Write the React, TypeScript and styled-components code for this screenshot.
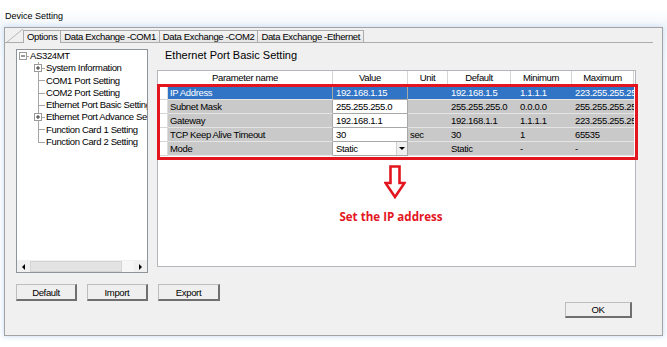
import React from 'react'
import styled, { createGlobalStyle } from 'styled-components'

const GlobalStyle = createGlobalStyle`
  html, body {
    margin: 0;
    padding: 0;
    background: #fff;
  }
  body {
    font-family: "Liberation Sans", Arial, sans-serif;
    font-size: 9.5px;
    letter-spacing: -0.35px;
    color: #000;
  }
  * {
    box-sizing: border-box;
  }
`

const Page = styled.div`
  width: 667px;
  height: 347px;
  overflow: hidden;
  background: linear-gradient(180deg, #fff 0, #fff 10px, #f4f8fc 24px, #fff 60px);
`

const Caption = styled.div`
  height: 27px;
  padding: 11px 0 0 5px;
  font-size: 9px;
  line-height: 11px;
  letter-spacing: 0;
`

const Window = styled.div`
  margin-left: 4px;
  width: 659px;
  height: 309px;
  border: 1px solid #a3a3a3;
  background: #f0f0f0;
  box-shadow: 0 0 5px 1px rgba(160, 195, 230, 0.45);
`

const TabStrip = styled.div`
  display: flex;
  align-items: flex-end;
  height: 14px;
`

const TabLead = styled.svg`
  width: 19px;
  height: 14px;
  flex: none;
`

const Tab = styled.div<{ $active?: boolean }>`
  height: ${p => (p.$active ? 13 : 12)}px;
  margin-left: -1px;
  margin-bottom: ${p => (p.$active ? -1 : 0)}px;
  padding: 0 3px;
  line-height: 11px;
  border: 1px solid #acacac;
  border-bottom: none;
  background: ${p => (p.$active ? '#f0f0f0' : 'linear-gradient(#f4f4f4, #e6e6e6)')};
  position: relative;
  z-index: ${p => (p.$active ? 1 : 0)};
  white-space: nowrap;
`

const Panel = styled.div`
  width: 648px;
  height: 293px;
  border-top: 1px solid #acacac;
  padding: 6px 16px 0 11px;
`

const MainRow = styled.div`
  display: flex;
  gap: 9px;
  height: 224px;
`

const TreeBox = styled.div`
  width: 132px;
  height: 224px;
  border: 1px solid #8f949b;
  background: #fff;
  display: flex;
  flex-direction: column;
`

const TreeItems = styled.div`
  flex: 1;
  overflow: hidden;
  white-space: nowrap;
`

const TreeRow = styled.div<{ $level: number }>`
  display: flex;
  align-items: stretch;
  height: 12.3px;
  line-height: 12.3px;
  padding-left: ${p => (p.$level === 0 ? 2 : 17)}px;
`

const Branch = styled.span<{ $root?: boolean; $last?: boolean }>`
  flex: none;
  width: ${p => (p.$root ? 10 : 11)}px;
  display: flex;
  align-items: center;
  background: ${p =>
    p.$root
      ? 'linear-gradient(#a5a5a5, #a5a5a5) 4px 50% / 6px 1px no-repeat'
      : `linear-gradient(#a5a5a5, #a5a5a5) 4px 0 / 1px ${p.$last ? '50%' : '100%'} no-repeat,
         linear-gradient(#a5a5a5, #a5a5a5) 4px 50% / 7px 1px no-repeat`};
`

const Expander = styled.svg`
  width: 9px;
  height: 9px;
  display: block;
`

const TreeLabel = styled.span`
  padding-left: 1px;
`

const HScroll = styled.div`
  flex: none;
  height: 12px;
  display: flex;
  background: #f0f0f0;
  border-top: 1px solid #f0f0f0;
`

const ScrollArrow = styled.div`
  width: 13px;
  display: flex;
  align-items: center;
  justify-content: center;
`

const ScrollThumb = styled.div`
  width: 92px;
  background: #e3e3e3;
  border: 1px solid #d4d4d4;
`

const ScrollTrack = styled.div`
  flex: 1;
  background: #f6f6f6;
`

const RightCol = styled.div`
  width: 479px;
  display: flex;
  flex-direction: column;
`

const SectionTitle = styled.div`
  height: 21px;
  padding-left: 8px;
  font-size: 11px;
  line-height: 13px;
  letter-spacing: 0;
`

const GridBox = styled.div`
  position: relative;
  height: 197px;
  border: 1px solid #b4b6bb;
  background: #fff;
  display: flex;
  flex-direction: column;
`

const Grid = styled.div`
  display: grid;
  grid-template-columns: 10px 165px 75px 40px 63px 61px 62px;
`

const HeadCell = styled.div<{ $span?: number }>`
  grid-column: span ${p => p.$span ?? 1};
  height: 15px;
  line-height: 14px;
  text-align: center;
  border-right: 1px solid #d5d5d5;
  border-bottom: 1px solid #d5d5d5;
  background: #fff;
  white-space: nowrap;
  overflow: hidden;
`

type CellKind = 'gutter' | 'name' | 'value' | 'info'

const Cell = styled.div<{ $kind: CellKind; $selected?: boolean; $pad?: number }>`
  display: flex;
  align-items: center;
  height: 14px;
  padding-left: ${p => (p.$kind === 'gutter' ? 0 : p.$pad ?? 3)}px;
  white-space: nowrap;
  overflow: hidden;
  border-bottom: 1px solid
    ${p => (p.$kind === 'value' ? '#a8a8a8' : p.$kind === 'gutter' ? '#d4d4d4' : '#e4e4e4')};
  background: ${p =>
    p.$selected && p.$kind !== 'gutter'
      ? '#3173c5'
      : p.$kind === 'name' || p.$kind === 'info'
      ? '#c9c9c9'
      : '#fff'};
  color: ${p => (p.$selected ? '#fff' : '#000')};
  ${p => p.$kind === 'name' && 'border-right: 1px solid #a8a8a8;'}
  ${p => p.$kind === 'value' && 'border-right: 1px solid #a8a8a8;'}
  ${p => p.$kind === 'gutter' && 'border-right: 1px solid #dcdcdc;'}
`

const SelectText = styled.span`
  flex: 1;
`

const DropButton = styled.span`
  width: 11px;
  height: 13px;
  display: flex;
  align-items: center;
  justify-content: center;
  background: #f0f0f0;
  border-left: 1px solid #d0d0d0;
`

const Highlight = styled.div`
  position: absolute;
  left: -1px;
  top: 13px;
  width: 481px;
  height: 76px;
  border: 3px solid #e3161f;
  pointer-events: none;
`

const Annotation = styled.div`
  display: flex;
  flex-direction: column;
  align-items: center;
  margin-top: 9px;
  padding-right: 11px;
`

const ArrowIcon = styled.svg`
  width: 22px;
  height: 34px;
  margin-left: 7px;
`

const Note = styled.div`
  margin-top: 10px;
  font-family: "Open Sans", "Liberation Sans", sans-serif;
  font-weight: 700;
  font-size: 11.6px;
  line-height: 15px;
  letter-spacing: 0;
  color: #e3161f;
`

const ButtonRow = styled.div<{ $end?: boolean }>`
  display: flex;
  gap: 10px;
  justify-content: ${p => (p.$end ? 'flex-end' : 'flex-start')};
  margin-top: ${p => (p.$end ? 1 : 11)}px;
  padding-right: ${p => (p.$end ? 5 : 0)}px;
`

const Button = styled.button<{ $width: number; $height?: number }>`
  width: ${p => p.$width}px;
  height: ${p => p.$height ?? 17}px;
  padding: 0;
  font: inherit;
  letter-spacing: inherit;
  color: #000;
  background: #efefef;
  border: 1px solid #bdbdbd;
  border-right: 2px solid #6f6f6f;
  border-bottom: 2px solid #6f6f6f;
`

type Row = {
  name: string
  value: string
  unit?: string
  def: string
  min: string
  max: string
  selected?: boolean
  select?: boolean
}

const rows: Row[] = [
  { name: 'IP Address', value: '192.168.1.15', def: '192.168.1.5', min: '1.1.1.1', max: '223.255.255.255', selected: true },
  { name: 'Subnet Mask', value: '255.255.255.0', def: '255.255.255.0', min: '0.0.0.0', max: '255.255.255.255' },
  { name: 'Gateway', value: '192.168.1.1', def: '192.168.1.1', min: '1.1.1.1', max: '223.255.255.255' },
  { name: 'TCP Keep Alive Timeout', value: '30', unit: 'sec', def: '30', min: '1', max: '65535' },
  { name: 'Mode', value: 'Static', def: 'Static', min: '-', max: '-', select: true },
]

type TreeNode = { label: string; expandable?: boolean }

const children: TreeNode[] = [
  { label: 'System Information', expandable: true },
  { label: 'COM1 Port Setting' },
  { label: 'COM2 Port Setting' },
  { label: 'Ethernet Port Basic Setting' },
  { label: 'Ethernet Port Advance Setting', expandable: true },
  { label: 'Function Card 1 Setting' },
  { label: 'Function Card 2 Setting' },
]

const tabs = ['Options', 'Data Exchange -COM1', 'Data Exchange -COM2', 'Data Exchange -Ethernet']

function ExpandBox({ open }: { open?: boolean }) {
  return (
    <Expander viewBox="0 0 9 9">
      <rect x="0.5" y="0.5" width="7" height="7" fill="#fff" stroke="#9a9a9a" />
      <line x1="2" y1="4" x2="6" y2="4" stroke="#333" />
      {!open && <line x1="4" y1="2" x2="4" y2="6" stroke="#333" />}
    </Expander>
  )
}

function Triangle({ dir }: { dir: 'left' | 'right' | 'down' }) {
  const points = dir === 'left' ? '4,0 4,6 1,3' : dir === 'right' ? '1,0 1,6 4,3' : '0,1 6,1 3,4'
  return (
    <svg width="6" height="6" viewBox="0 0 6 6">
      <polygon points={points} fill="#000" />
    </svg>
  )
}

function Tree() {
  return (
    <TreeBox>
      <TreeItems>
        <TreeRow $level={0}>
          <Branch $root>
            <ExpandBox open />
          </Branch>
          <TreeLabel>AS324MT</TreeLabel>
        </TreeRow>
        {children.map((node, i) => (
          <TreeRow key={node.label} $level={1}>
            <Branch $last={i === children.length - 1}>{node.expandable && <ExpandBox />}</Branch>
            <TreeLabel>{node.label}</TreeLabel>
          </TreeRow>
        ))}
      </TreeItems>
      <HScroll>
        <ScrollArrow>
          <Triangle dir="left" />
        </ScrollArrow>
        <ScrollThumb />
        <ScrollTrack />
        <ScrollArrow>
          <Triangle dir="right" />
        </ScrollArrow>
      </HScroll>
    </TreeBox>
  )
}

function ParamGrid() {
  return (
    <GridBox>
      <Grid>
        <HeadCell $span={2}>Parameter name</HeadCell>
        <HeadCell>Value</HeadCell>
        <HeadCell>Unit</HeadCell>
        <HeadCell>Default</HeadCell>
        <HeadCell>Minimum</HeadCell>
        <HeadCell>Maximum</HeadCell>
        {rows.map(r => (
          <React.Fragment key={r.name}>
            <Cell $kind="gutter" />
            <Cell $kind="name" $selected={r.selected} $pad={2}>
              {r.name}
            </Cell>
            <Cell $kind="value" $selected={r.selected} $pad={3}>
              {r.select ? (
                <>
                  <SelectText>{r.value}</SelectText>
                  <DropButton>
                    <Triangle dir="down" />
                  </DropButton>
                </>
              ) : (
                r.value
              )}
            </Cell>
            <Cell $kind="info" $selected={r.selected} $pad={2}>
              {r.unit}
            </Cell>
            <Cell $kind="info" $selected={r.selected}>
              {r.def}
            </Cell>
            <Cell $kind="info" $selected={r.selected} $pad={9}>
              {r.min}
            </Cell>
            <Cell $kind="info" $selected={r.selected}>
              {r.max}
            </Cell>
          </React.Fragment>
        ))}
      </Grid>
      <Highlight />
      <Annotation>
        <ArrowIcon viewBox="0 0 22 34">
          <path d="M6.5 1.5 H15.5 V18 H20.5 L11 32 L1.5 18 H6.5 Z" fill="#fff" stroke="#e3161f" strokeWidth="2.6" strokeLinejoin="miter" />
        </ArrowIcon>
        <Note>Set the IP address</Note>
      </Annotation>
    </GridBox>
  )
}

export default function App() {
  return (
    <Page>
      <GlobalStyle />
      <Caption>Device Setting</Caption>
      <Window>
        <TabStrip>
          <TabLead viewBox="0 0 19 14">
            <line x1="2" y1="14" x2="18" y2="1" stroke="#b5b5b5" />
          </TabLead>
          {tabs.map((t, i) => (
            <Tab key={t} $active={i === 0}>
              {t}
            </Tab>
          ))}
        </TabStrip>
        <Panel>
          <MainRow>
            <Tree />
            <RightCol>
              <SectionTitle>Ethernet Port Basic Setting</SectionTitle>
              <ParamGrid />
            </RightCol>
          </MainRow>
          <ButtonRow>
            <Button $width={61}>Default</Button>
            <Button $width={61}>Import</Button>
            <Button $width={62}>Export</Button>
          </ButtonRow>
          <ButtonRow $end>
            <Button $width={67} $height={16}>
              OK
            </Button>
          </ButtonRow>
        </Panel>
      </Window>
    </Page>
  )
}
